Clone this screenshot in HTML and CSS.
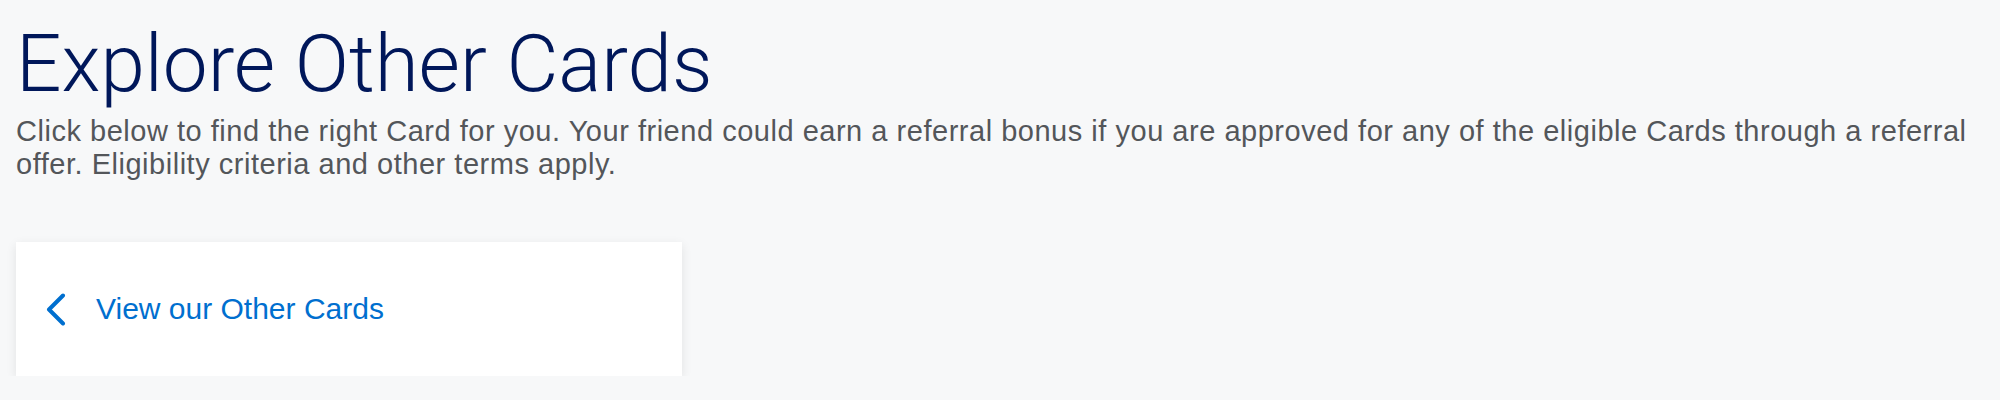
FILE: index.html
```html
<!DOCTYPE html>
<html lang="en">
<head>
  <meta charset="UTF-8">
  <meta name="viewport" content="width=device-width, initial-scale=1.0">
  <title>Explore Other Cards</title>
  <link rel="stylesheet" href="styles.css">
</head>
<body>
  <div class="container">
    <h1 class="title">Explore Other Cards</h1>
    <p class="intro">Click below to find the right Card for you. Your friend could earn a referral bonus if you are approved for any of the eligible Cards through a referral offer. Eligibility criteria and other terms apply.</p>

    <a class="card-link" href="#">
      <svg class="chevron" width="20" height="33" viewBox="0 0 20 33" aria-hidden="true">
        <path d="M17 2.5 L3 16.5 L17 30.5" fill="none" stroke="#006fcf" stroke-width="4" stroke-linecap="round" stroke-linejoin="round"/>
      </svg>
      <span>View our Other Cards</span>
    </a>
  </div>
</body>
</html>
```

FILE: styles.css
```css
body { margin: 0; background-color: #f7f8f9; font-family: "Liberation Sans", Arial, sans-serif; }
.container { padding: 0 16px; }
.title { margin: 0; padding-top: 20px; font-family: Roboto, "Liberation Sans", sans-serif; font-weight: 300; font-size: 80px; line-height: 88px; color: #00175a; }
.intro { margin: 7px 0 0; max-width: 1962px; font-size: 29px; line-height: 33px; letter-spacing: 0.52px; color: #53565a; }
.card-link { display: flex; align-items: center; gap: 30px; width: 666px; height: 134px; box-sizing: border-box; margin-top: 61px; padding-left: 30px; background-color: #fff; box-shadow: 0 3px 10px rgba(0, 0, 0, 0.09); color: #006fcf; text-decoration: none; font-size: 30px; }
.chevron { flex: none; }
```
